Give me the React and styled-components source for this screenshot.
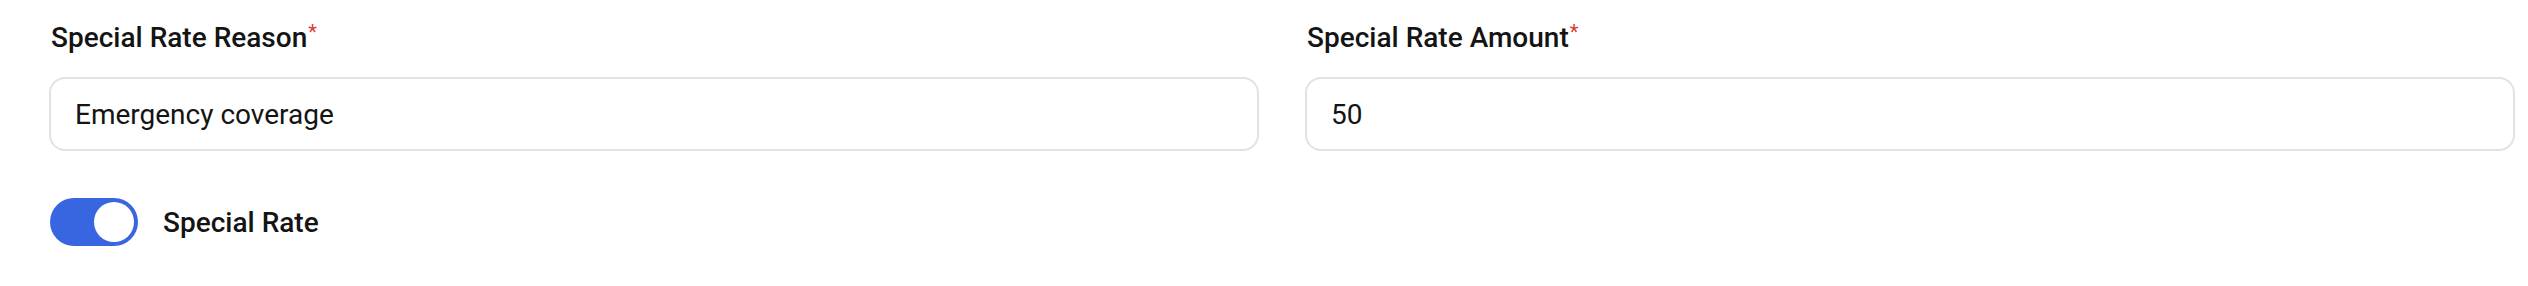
import React, { useState } from "react";
import styled, { createGlobalStyle } from "styled-components";

const GlobalStyle = createGlobalStyle`
  html, body {
    margin: 0;
    padding: 0;
    background: #ffffff;
  }
  body {
    font-family: Roboto, "Liberation Sans", Arial, sans-serif;
    color: #141414;
  }
`;

const Form = styled.div`
  padding: 21px 13px 0 49px;
`;

const Grid = styled.div`
  display: grid;
  grid-template-columns: 1fr 1fr;
  column-gap: 46px;
`;

const Field = styled.div`
  display: flex;
  flex-direction: column;
`;

const Label = styled.label`
  font-size: 28px;
  font-weight: 500;
  line-height: 33px;
  color: #141414;
  padding-left: 2px;
`;

const Required = styled.span`
  color: #d63b35;
  font-size: 20px;
  font-weight: 400;
  vertical-align: top;
  position: relative;
  top: -5px;
  margin-left: 1px;
`;

const Input = styled.input`
  margin-top: 23px;
  box-sizing: border-box;
  height: 74px;
  width: 100%;
  border: 2px solid #e2e2e2;
  border-radius: 16px;
  padding: 0 24px;
  font-family: Roboto, "Liberation Sans", Arial, sans-serif;
  font-size: 28px;
  color: #141414;
  background: #fff;
  outline: none;
`;

const ToggleRow = styled.div`
  display: flex;
  align-items: center;
  gap: 25px;
  margin-top: 47px;
  padding-left: 1px;
`;

const Track = styled.button`
  position: relative;
  width: 88px;
  height: 48px;
  border: none;
  padding: 0;
  border-radius: 24px;
  background: ${(p) => (p.$on ? "#3865e0" : "#c9cbd1")};
  cursor: pointer;
`;

const Knob = styled.span`
  position: absolute;
  top: 4px;
  left: ${(p) => (p.$on ? "44px" : "4px")};
  width: 40px;
  height: 40px;
  border-radius: 50%;
  background: #fff;
`;

const ToggleText = styled.span`
  font-size: 28px;
  font-weight: 500;
  color: #141414;
`;

export default function App() {
  const [on, setOn] = useState(true);
  return (
    <>
      <GlobalStyle />
      <Form>
        <Grid>
          <Field>
            <Label>
              Special Rate Reason<Required>*</Required>
            </Label>
            <Input defaultValue="Emergency coverage" />
          </Field>
          <Field>
            <Label>
              Special Rate Amount<Required>*</Required>
            </Label>
            <Input defaultValue="50" />
          </Field>
        </Grid>
        <ToggleRow>
          <Track $on={on} onClick={() => setOn(!on)}>
            <Knob $on={on} />
          </Track>
          <ToggleText>Special Rate</ToggleText>
        </ToggleRow>
      </Form>
    </>
  );
}
